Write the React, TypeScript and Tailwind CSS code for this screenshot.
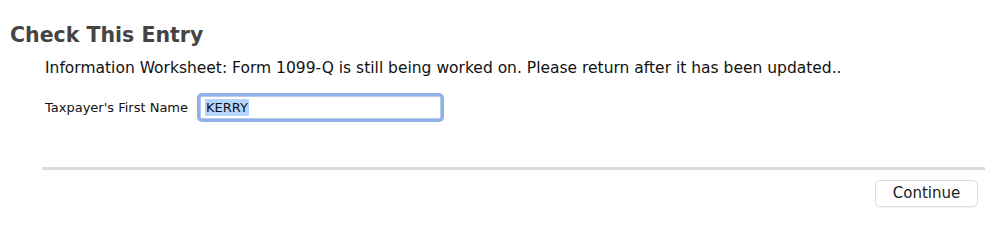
export default function App() {
  return (
    <div className="w-[999px] h-[237px] bg-white font-['DejaVu_Sans',sans-serif] text-[#111]">
      <h1 className="pl-[10px] pt-[22px] text-[20.5px] leading-[26px] font-bold text-[#444]">Check This Entry</h1>
      <div className="pl-[45px] pr-[14px]">
        <p className="mt-[9px] text-[15.5px] leading-[22px]">
          Information Worksheet: Form 1099-Q is still being worked on. Please return after it has been updated..
        </p>
        <div className="mt-[14px] flex items-center gap-[9px]">
          <label className="text-[13px]">Taxpayer's First Name</label>
          <div className="w-[247px] h-[29px] rounded-[5px] bg-[#8fb1ea] p-[3px]">
            <div className="h-full rounded-[2px] bg-white border border-[#b9c8e6] flex items-center pl-[4px]">
              <span className="bg-[#b4d5fe] text-[13px] leading-[17px] px-[1px] font-medium">KERRY</span>
            </div>
          </div>
        </div>
      </div>
      <div className="ml-[42px] mr-[14px] mt-[45px] h-[3px] bg-[#dcdcdc]" />
      <div className="flex justify-end pr-[21px] pt-[10px]">
        <button className="w-[103px] h-[27px] rounded-[5px] border border-[#dcdcdc] bg-white text-[15px] text-[#222] shadow-[0_1px_1px_rgba(0,0,0,0.05)]">
          Continue
        </button>
      </div>
    </div>
  );
}
